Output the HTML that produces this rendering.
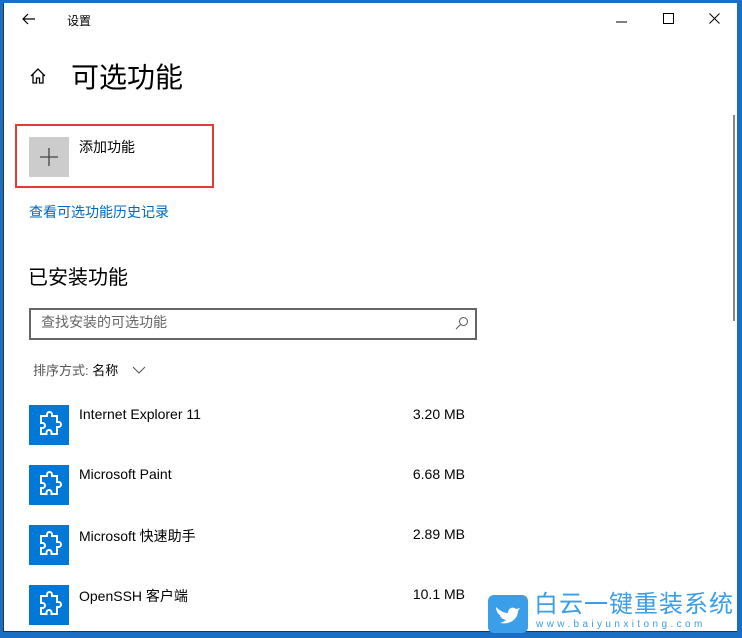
<!DOCTYPE html>
<html><head><meta charset="utf-8"><style>
*{margin:0;padding:0;box-sizing:border-box}
body{width:742px;height:638px;overflow:hidden;background:#1a6fc4;font-family:"Liberation Sans","Noto Sans CJK SC",sans-serif;position:relative}
#win{position:absolute;left:3px;top:3px;width:734px;height:629px;background:#fff;border-left:1px solid #333;border-bottom:1px solid #333}
.a{position:absolute;white-space:nowrap;color:#000}
.icon{position:absolute;left:25px;width:40px;height:40px;background:#0078d7}
.name{left:75px;font-size:14px}
.size{font-size:14px;text-align:right;width:100px;left:361px}
</style></head><body>
<div id="win">
<svg class="a" style="left:18px;top:10px" width="14" height="12" viewBox="0 0 14 12"><path d="M6 1L1 6L6 11M1 6H13" fill="none" stroke="#000" stroke-width="1.2"/></svg>
<div class="a" style="left:63px;top:9px;font-size:12px">设置</div>
<svg class="a" style="left:612px;top:13px" width="12" height="10"><path d="M0 6H11" stroke="#000" stroke-width="1"/></svg>
<svg class="a" style="left:659px;top:10px" width="12" height="12"><rect x="0.5" y="0.5" width="10" height="10" fill="none" stroke="#000"/></svg>
<svg class="a" style="left:705px;top:10px" width="12" height="12"><path d="M0.5 0.5L10.5 10.5M10.5 0.5L0.5 10.5" stroke="#000"/></svg>
<svg class="a" style="left:25px;top:64px" width="18" height="18" viewBox="0 0 18 18"><path d="M2 9L9 2L16 9M4 7.5V16H7.5V11H10.5V16H14V7.5" fill="none" stroke="#000" stroke-width="1.3"/></svg>
<div class="a" style="left:67px;top:53px;font-size:28px">可选功能</div>
<div class="a" style="left:11px;top:121px;width:199px;height:64px;border:2px solid #e53935"></div>
<div class="a" style="left:25px;top:134px;width:40px;height:40px;background:#ccc"></div>
<svg class="a" style="left:35px;top:144px" width="20" height="20"><path d="M10 1V19M1 10H19" stroke="#444" stroke-width="1.3"/></svg>
<div class="a" style="left:75px;top:134px;font-size:14px">添加功能</div>
<div class="a" style="left:25px;top:199px;font-size:14px;color:#0067c0">查看可选功能历史记录</div>
<div class="a" style="left:24px;top:258px;font-size:20px">已安装功能</div>
<div class="a" style="left:25px;top:305px;width:448px;height:32px;border:2px solid #666"></div>
<div class="a" style="left:37px;top:309px;font-size:14px;color:#666">查找安装的可选功能</div>
<svg class="a" style="left:451px;top:313px" width="14" height="14"><circle cx="8.5" cy="5.5" r="4" fill="none" stroke="#555"/><path d="M5.5 8.5L1 13" stroke="#555"/></svg>
<div class="a" style="left:29px;top:357px;font-size:13px;color:#555">排序方式: <span style="color:#000">名称</span></div>
<svg class="a" style="left:128px;top:363px" width="14" height="8"><path d="M1 1L7 7L13 1" fill="none" stroke="#555"/></svg>
<svg width="0" height="0" style="position:absolute"><defs><symbol id="pz" viewBox="0 0 40 40"><path d="M13 11H18V9.5A2.5 2.5 0 0 1 23 9.5V11H28V17H29.5A2.5 2.5 0 0 1 29.5 22H28V29H22.5V27.5A2.5 2.5 0 0 0 17.5 27.5V29H12V23H13.5A2.5 2.5 0 0 0 13.5 18H12V11Z" fill="none" stroke="#fff" stroke-width="2"/></symbol></defs></svg>
<div class="icon" style="top:402px"><svg width="40" height="40"><use href="#pz"/></svg></div>
<div class="a name" style="top:403px">Internet Explorer 11</div><div class="a size" style="top:403px">3.20 MB</div>
<div class="icon" style="top:462px"><svg width="40" height="40"><use href="#pz"/></svg></div>
<div class="a name" style="top:463px">Microsoft Paint</div><div class="a size" style="top:463px">6.68 MB</div>
<div class="icon" style="top:522px"><svg width="40" height="40"><use href="#pz"/></svg></div>
<div class="a name" style="top:523px">Microsoft 快速助手</div><div class="a size" style="top:523px">2.89 MB</div>
<div class="icon" style="top:582px"><svg width="40" height="40"><use href="#pz"/></svg></div>
<div class="a name" style="top:583px">OpenSSH 客户端</div><div class="a size" style="top:583px">10.1 MB</div>
<div class="a" style="left:729px;top:112px;width:2px;height:206px;background:#888"></div>
<div class="a" style="left:484px;top:592px;width:40px;height:38px;background:#3a9ee8;border-radius:6px"></div>
<svg class="a" style="left:490px;top:598px" width="28" height="26" viewBox="0 0 28 26"><path d="M2 6C6 10 10 12 14 12C14 7 19 5 22 8L26 7L24 10C24 18 16 24 6 22C10 21 12 19 12 19C8 18 6 16 6 14C4 13 2 10 2 6Z" fill="#fff"/></svg>
<div class="a" style="left:530px;top:588px;font-size:24px;line-height:28px;color:#3a9ee8;letter-spacing:1px">白云一键重装系统</div>
<div class="a" style="left:532px;top:616px;font-size:10px;line-height:12px;color:#3a9ee8;letter-spacing:3.4px">www.baiyunxitong.com</div>
</div>
</body></html>
